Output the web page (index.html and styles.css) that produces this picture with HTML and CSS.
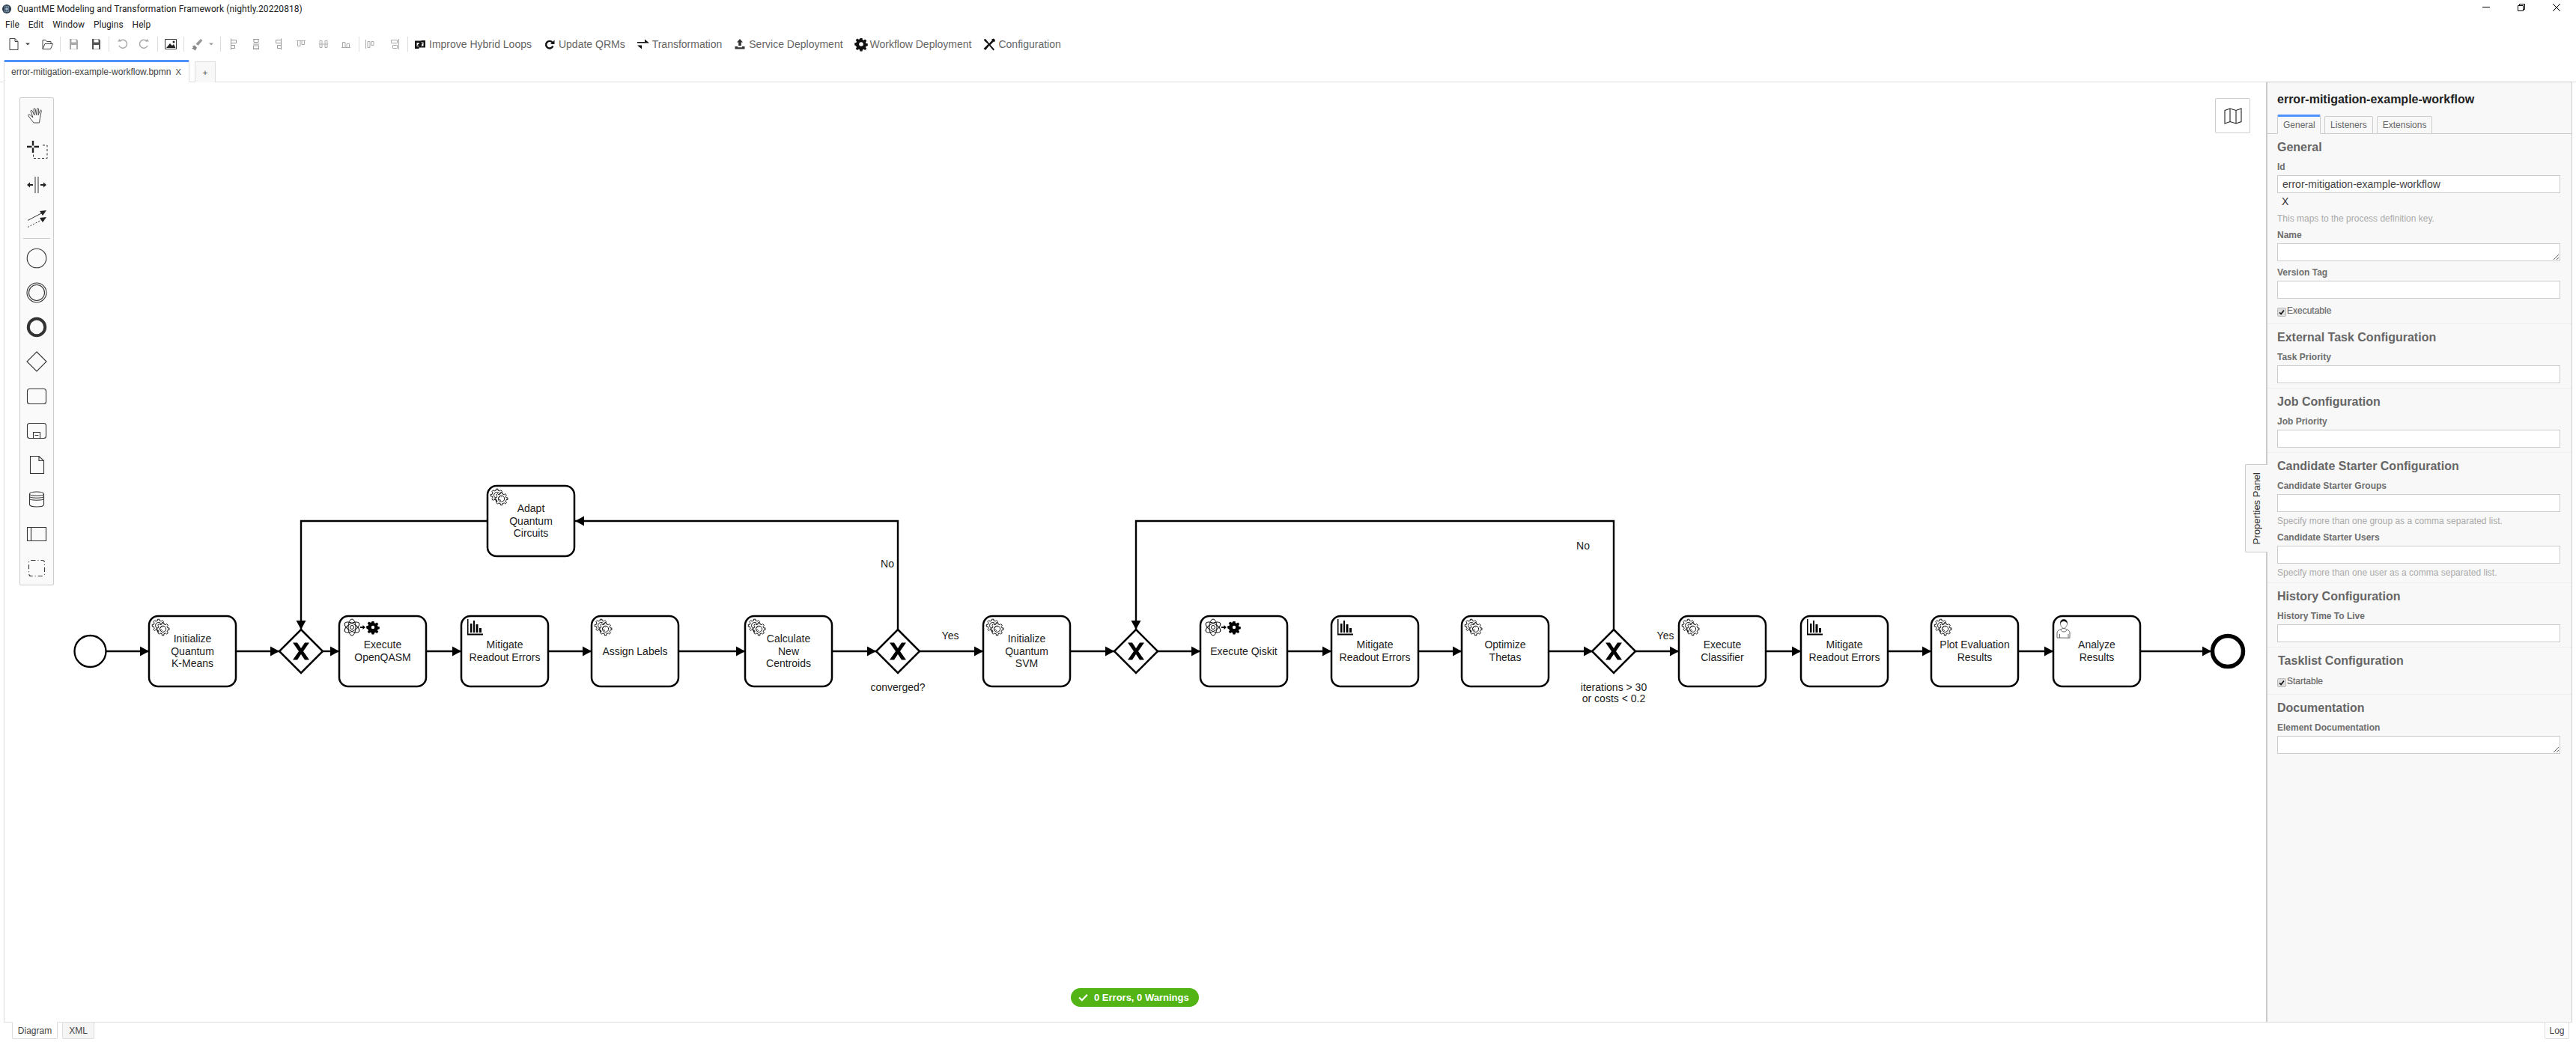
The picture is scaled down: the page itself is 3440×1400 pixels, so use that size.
FILE: index.html
```html
<!DOCTYPE html>
<html lang="en">
<head>
<meta charset="utf-8">
<title>QuantME Modeling and Transformation Framework</title>
<link rel="stylesheet" href="styles.css">
</head>
<body>
<header class="titlebar">
  <svg class="app-icon" viewBox="0 0 12 12"><circle cx="6" cy="6" r="6" fill="#2b3a4d"/><circle cx="6" cy="6" r="1.2" fill="#a9c4d8"/><ellipse cx="6" cy="6" rx="4.6" ry="1.8" fill="none" stroke="#a9c4d8" stroke-width=".6" transform="rotate(60 6 6)"/><ellipse cx="6" cy="6" rx="4.6" ry="1.8" fill="none" stroke="#a9c4d8" stroke-width=".6" transform="rotate(-60 6 6)"/></svg>
  <span class="title-text">QuantME Modeling and Transformation Framework (nightly.20220818)</span>
  <div class="win-controls">
    <svg class="win-btn" viewBox="0 0 12 12"><path d="M1 5.5h10" stroke="#000" fill="none"/></svg>
    <svg class="win-btn" viewBox="0 0 12 12"><path d="M1.5 3.5h7v7h-7zM3.5 3.5v-2h7v7h-2" stroke="#000" fill="none"/></svg>
    <svg class="win-btn" viewBox="0 0 12 12"><path d="M1 1l10 10M11 1L1 11" stroke="#000" fill="none"/></svg>
  </div>
</header>
<nav class="menubar"><span>File</span><span>Edit</span><span>Window</span><span>Plugins</span><span>Help</span></nav>

<div class="toolbar">
  <svg class="tb" viewBox="0 0 30 20"><path d="M10 2.5h7l4 4v11H10zM17 2.5v4h4" fill="none" stroke="#444"/></svg>
  <svg class="tb-caret caret-a" viewBox="0 0 8 20"><path d="M1 8.5h6l-3 3z" fill="#444"/></svg>
  <svg class="tb" viewBox="0 0 30 20"><path d="M9 16.5v-12h4l1.500 2H20v2.500M9 16.500l3-7h10.500l-3 7z" fill="none" stroke="#444"/></svg>
  <i class="sep"></i>
  <svg class="tb" viewBox="0 0 30 20"><path d="M10 3h9l2 2v12H10z" fill="#aaa"/><path d="M12.500 3.500h6v4h-6zM12 11h7v5.500h-7z" fill="#fff"/></svg>
  <svg class="tb" viewBox="0 0 30 20"><path d="M10 3h9l2 2v12H10z" fill="#555"/><path d="M12.500 3.500h6v4h-6zM12 11h7v5.500h-7z" fill="#fff"/></svg>
  <i class="sep"></i>
  <svg class="tb" viewBox="0 0 30 20"><path d="M12 6a5.500 5.500 0 1 1-1 6" fill="none" stroke="#aaa" stroke-width="1.500"/><path d="M9 6.500h5l-2.500-3.500z" fill="#aaa"/></svg>
  <svg class="tb" viewBox="0 0 30 20"><path d="M18 6a5.500 5.500 0 1 0 1 6" fill="none" stroke="#aaa" stroke-width="1.500"/><path d="M21 6.500h-5l2.500-3.500z" fill="#aaa"/></svg>
  <i class="sep"></i>
  <svg class="tb" viewBox="0 0 30 20"><path d="M7.500 3.500h15v13h-15z" fill="#fff" stroke="#333"/><path d="M9 15l5-6 3 3 2-2 2.500 5z" fill="#222"/><circle cx="19" cy="7" r="1.500" fill="#222"/></svg>
  <i class="sep"></i>
  <svg class="tb" viewBox="0 0 30 20"><path d="M20 3l2.500 2-6 7-3-2.500z" fill="#999"/><path d="M9 12.500l3-1 3 3-2 4-5-3 2-1z" fill="#888"/></svg>
  <svg class="tb-caret caret-b" viewBox="0 0 8 20"><path d="M1 8.500h6l-3 3z" fill="#999"/></svg>
  <i class="sep"></i>
  <svg class="tb" viewBox="0 0 30 20"><path d="M11.500 2.500v15M11.500 4.500h7v4h-7zM11.500 11.500h5v4h-5z" fill="none" stroke="#999"/></svg>
  <svg class="tb" viewBox="0 0 30 20"><path d="M11 3.500h8M11 10h8M11 16.500h8M12 3.500h6v4h-6zM11.500 12h7v4h-7z" fill="none" stroke="#999"/></svg>
  <svg class="tb" viewBox="0 0 30 20"><path d="M18.500 2.500v15M11.500 4.500h7v4h-7zM13.500 11.500h5v4h-5z" fill="none" stroke="#999"/></svg>
  <svg class="tb" viewBox="0 0 30 20"><path d="M9 5.500h12M10.500 5.500h3.500v7h-3.500zM16 5.500h3.500v5H16z" fill="none" stroke="#aaa"/></svg>
  <svg class="tb" viewBox="0 0 30 20"><path d="M10 5.500h3v9h-3zM17 5.500h3v9h-3zM9 10h12" fill="none" stroke="#aaa"/></svg>
  <svg class="tb" viewBox="0 0 30 20"><path d="M9 14.500h12M10.500 7.500h3.500v7h-3.500zM16 9.500h3.500v5H16z" fill="none" stroke="#aaa"/></svg>
  <i class="sep"></i>
  <svg class="tb tb-shift" viewBox="0 0 30 20"><path d="M11 6.500h3v8h-3zM16 6.500h3v5h-3zM8.500 4v12" fill="none" stroke="#aaa"/></svg>
  <svg class="tb" viewBox="0 0 30 20"><path d="M10.500 4.500h8v4h-8zM12.500 11.500h6v4h-6zM20.500 3v14" fill="none" stroke="#aaa"/></svg>
  <i class="sep"></i>
  <div class="tool-buttons">
    <div class="tbtn"><svg viewBox="0 0 16 16"><path d="M1 3.500h8.500v3H12L8.500 10.500 6 6.500h1v-.500H3.500v5h3V14H1zM15 12.500H6.500v-2.500H4L7.500 5.500 10.500 10H9v.500h3.500v-5h-3V3h5.500z" fill="#111"/></svg><span>Improve Hybrid Loops</span></div>
    <div class="tbtn"><svg viewBox="0 0 16 16"><path d="M12.500 4.800A6 6 0 1 0 13.500 11l-2.200-1a3.600 3.600 0 1 1-.6-3.600L8.800 8H14.500V2.200z" fill="#111"/></svg><span>Update QRMs</span></div>
    <div class="tbtn"><svg viewBox="0 0 16 16"><path d="M0 5h10V1.500L16 6.500H0zM16 9.500H6V14.500L0 9.500z" fill="#111"/></svg><span>Transformation</span></div>
    <div class="tbtn"><svg viewBox="0 0 16 16"><path d="M8 1l4 4.500H9.800V10H6.200V5.500H4zM1.500 11H5v1.300h6V11h3.500v3.500h-13z" fill="#333"/></svg><span>Service Deployment</span></div>
    <div class="tbtn"><svg viewBox="0 0 16 16"><path fill-rule="evenodd" d="M6.500 0h3l.4 2.200 1.500.6 1.800-1.300 2.100 2.100-1.300 1.800.6 1.500 2.200.4v3l-2.200.4-.6 1.500 1.300 1.800-2.100 2.100-1.800-1.300-1.500.6-.4 2.200h-3l-.4-2.200-1.500-.6-1.800 1.300-2.100-2.100 1.300-1.800-.6-1.500L-.8 9.300v-3l2.200-.4.600-1.500L.7 2.600l2.100-2.100 1.800 1.300 1.500-.6zM8 5.200a2.800 2.800 0 1 0 0 5.600 2.800 2.800 0 0 0 0-5.600z" fill="#111"/></svg><span>Workflow Deployment</span></div>
    <div class="tbtn"><svg viewBox="0 0 16 16"><path d="M1 1.500l2-.5 5 6 4-4.500-1-1 3-1 2 2-1 3-1-1L9.500 9 15 15l-1.500 1.500-5.500-6.500-5 6L0.500 14l6-6L1.500 3.500z" fill="#111"/></svg><span>Configuration</span></div>
  </div>
</div>

<div class="tabbar">
  <div class="tab tab-active"><span>error-mitigation-example-workflow.bpmn</span><span class="tab-x">X</span></div>
  <div class="tab tab-plus">+</div>
</div>

<main class="main">
  <section class="canvas">
    <svg class="diagram" viewBox="6 110 3020 1255" width="3020" height="1255">
      <defs>
        <marker id="arrow" markerUnits="userSpaceOnUse" markerWidth="12" markerHeight="14" refX="12" refY="7" orient="auto"><path d="M0 0.500L12 7 0 13.500z" fill="#000"/></marker>
        <g id="gears" transform="scale(1.17)">
          <path class="gear" d="m 12,18 v -1.71335 c 0.352326,-0.0705 0.703932,-0.17838 1.047628,-0.32133 0.344416,-0.14465 0.665822,-0.32133 0.966377,-0.52145 l 1.19431,1.18005 1.567487,-1.57688 -1.195028,-1.18014 c 0.403376,-0.61394 0.683079,-1.29908 0.825447,-2.01824 l 1.622133,-0.01 v -2.2196 l -1.636514,0.01 c -0.07333,-0.35153 -0.178319,-0.70024 -0.323564,-1.04372 -0.145244,-0.34406 -0.321407,-0.6644 -0.522735,-0.96217 l 1.131035,-1.13631 -1.583305,-1.56293 -1.129598,1.13589 c -0.614052,-0.40108 -1.302883,-0.68093 -2.022633,-0.82247 l 0.0093,-1.61852 h -2.241173 l 0.0042,1.63124 c -0.353763,0.0736 -0.705369,0.17977 -1.049785,0.32371 -0.344415,0.14437 -0.665102,0.32092 -0.9635006,0.52046 l -1.1698628,-1.15823 -1.5667691,1.5792 1.1684265,1.15669 c -0.4026573,0.61283 -0.68308,1.29797 -0.8247287,2.01713 l -1.6588041,0.003 v 2.22174 l 1.6724648,-0.006 c 0.073327,0.35077 0.1797598,0.70243 0.3242851,1.04472 0.1452428,0.34448 0.3214064,0.6644 0.5227339,0.96066 l -1.1993431,1.19723 1.5840256,1.56011 1.1964668,-1.19348 c 0.6140517,0.40346 1.3028827,0.68232 2.0233517,0.82331 l 7.19e-4,1.69892 h 2.226848 z m 0.221462,-3.9957 c -1.788948,0.7502 -3.8576,-0.0928 -4.6097055,-1.87438 -0.7521065,-1.78321 0.090598,-3.84627 1.8802645,-4.59604 1.78823,-0.74936 3.856881,0.0929 4.608987,1.87437 0.752106,1.78165 -0.0906,3.84612 -1.879546,4.59605 z"/>
          <path class="gear-fill" d="m 17.2,18 c 1.788948,0.7502 3.8576,-0.0928 4.6097055,-1.87438 0.7521065,-1.78321 -0.090598,-3.84627 -1.8802645,-4.59604 -1.78823,-0.74936 -3.856881,0.0929 -4.608987,1.87437 -0.752106,1.78165 0.0906,3.84612 1.879546,4.59605 z"/>
          <path class="gear" d="m 17,22 v -1.71335 c 0.352326,-0.0705 0.703932,-0.17838 1.047628,-0.32133 0.344416,-0.14465 0.665822,-0.32133 0.966377,-0.52145 l 1.19431,1.18005 1.567487,-1.57688 -1.195028,-1.18014 c 0.403376,-0.61394 0.683079,-1.29908 0.825447,-2.01824 l 1.622133,-0.01 v -2.2196 l -1.636514,0.01 c -0.07333,-0.35153 -0.178319,-0.70024 -0.323564,-1.04372 -0.145244,-0.34406 -0.321407,-0.6644 -0.522735,-0.96217 l 1.131035,-1.13631 -1.583305,-1.56293 -1.129598,1.13589 c -0.614052,-0.40108 -1.302883,-0.68093 -2.022633,-0.82247 l 0.0093,-1.61852 h -2.241173 l 0.0042,1.63124 c -0.353763,0.0736 -0.705369,0.17977 -1.049785,0.32371 -0.344415,0.14437 -0.665102,0.32092 -0.9635006,0.52046 l -1.1698628,-1.15823 -1.5667691,1.5792 1.1684265,1.15669 c -0.4026573,0.61283 -0.68308,1.29797 -0.8247287,2.01713 l -1.6588041,0.003 v 2.22174 l 1.6724648,-0.006 c 0.073327,0.35077 0.1797598,0.70243 0.3242851,1.04472 0.1452428,0.34448 0.3214064,0.6644 0.5227339,0.96066 l -1.1993431,1.19723 1.5840256,1.56011 1.1964668,-1.19348 c 0.6140517,0.40346 1.3028827,0.68232 2.0233517,0.82331 l 7.19e-4,1.69892 h 2.226848 z m 0.221462,-3.9957 c -1.788948,0.7502 -3.8576,-0.0928 -4.6097055,-1.87438 -0.7521065,-1.78321 0.090598,-3.84627 1.8802645,-4.59604 1.78823,-0.74936 3.856881,0.0929 4.608987,1.87437 0.752106,1.78165 -0.0906,3.84612 -1.879546,4.59605 z"/>
        </g>
        <g id="quantum">
          <g class="atom">
            <ellipse cx="17" cy="15" rx="5" ry="11" transform="rotate(60 17 15)"/>
            <ellipse cx="17" cy="15" rx="5" ry="11" transform="rotate(-60 17 15)"/>
            <ellipse cx="17" cy="15" rx="5" ry="11"/>
            <circle cx="17" cy="15" r="2.500"/>
          </g>
          <path d="M28 14h3.500v-2l3.500 3-3.500 3v-2H28z" fill="#000"/>
          <path fill-rule="evenodd" transform="translate(37 7)" d="M6.500 0h3l.4 2.200 1.500.6 1.800-1.300 2.100 2.100-1.300 1.800.6 1.500 2.200.4v3l-2.200.4-.6 1.500 1.300 1.800-2.100 2.100-1.800-1.300-1.500.6-.4 2.200h-3l-.4-2.200-1.500-.6-1.800 1.300-2.100-2.100 1.300-1.800-.6-1.500L-.8 9.300v-3l2.200-.4.600-1.500L.7 2.600l2.100-2.100 1.800 1.300 1.500-.6zM8 5.800a2.200 2.200 0 1 0 0 4.400 2.200 2.200 0 0 0 0-4.400z" fill="#000"/>
        </g>
        <g id="chart">
          <path d="M8 4h1.500v19.500H29V25.500H8z" fill="#000"/>
          <path d="M12 10h2.500v12H12zM16 6h2v16h-2zM19.500 11h3v11h-3zM24 16h3v6h-3z" fill="#000"/>
        </g>
        <rect id="box" class="task" x="0" y="0" width="116" height="94" rx="12"/>
        <g id="gw">
          <polygon class="task" points="0,-29 29,0 0,29 -29,0"/>
          <polygon points="-11,-11.500 -5,-11.500 0,-4 5,-11.500 11,-11.500 3,0 11,11.500 5,11.500 0,4 -5,11.500 -11,11.500 -3,0" fill="#000"/>
        </g>
      </defs>

      <g class="flows">
        <path marker-end="url(#arrow)" d="M142 870H199"/>
        <path marker-end="url(#arrow)" d="M315 870H373"/>
        <path marker-end="url(#arrow)" d="M431 870H453"/>
        <path marker-end="url(#arrow)" d="M570 870H616"/>
        <path marker-end="url(#arrow)" d="M733 870H790"/>
        <path marker-end="url(#arrow)" d="M906 870H995"/>
        <path marker-end="url(#arrow)" d="M1111 870H1170"/>
        <path marker-end="url(#arrow)" d="M1227 870H1313"/>
        <path marker-end="url(#arrow)" d="M1429 870H1488"/>
        <path marker-end="url(#arrow)" d="M1546 870H1603"/>
        <path marker-end="url(#arrow)" d="M1720 870H1778"/>
        <path marker-end="url(#arrow)" d="M1895 870H1952"/>
        <path marker-end="url(#arrow)" d="M2069 870H2127"/>
        <path marker-end="url(#arrow)" d="M2184 870H2242"/>
        <path marker-end="url(#arrow)" d="M2359 870H2405"/>
        <path marker-end="url(#arrow)" d="M2522 870H2579"/>
        <path marker-end="url(#arrow)" d="M2696 870H2742"/>
        <path marker-end="url(#arrow)" d="M2859 870H2953"/>
        <path marker-end="url(#arrow)" d="M1199 841V696H768"/>
        <path marker-end="url(#arrow)" d="M651 696H402V841"/>
        <path marker-end="url(#arrow)" d="M2155 841V696H1517V841"/>
      </g>

      <circle class="task thin" cx="120.500" cy="870" r="21"/>
      <circle class="end" cx="2975" cy="870" r="20.500"/>

      <use href="#gw" x="402" y="870"/>
      <use href="#gw" x="1199" y="870"/>
      <use href="#gw" x="1517" y="870"/>
      <use href="#gw" x="2155" y="870"/>

      <g transform="translate(199 823)"><use href="#box"/><use href="#gears"/><text class="lbl"><tspan x="58" y="35">Initialize</tspan><tspan x="58" y="52">Quantum</tspan><tspan x="58" y="68">K-Means</tspan></text></g>
      <g transform="translate(651 649)"><use href="#box"/><use href="#gears"/><text class="lbl"><tspan x="58" y="35">Adapt</tspan><tspan x="58" y="52">Quantum</tspan><tspan x="58" y="68">Circuits</tspan></text></g>
      <g transform="translate(453 823)"><use href="#box"/><use href="#quantum"/><text class="lbl"><tspan x="58" y="43">Execute</tspan><tspan x="58" y="60">OpenQASM</tspan></text></g>
      <g transform="translate(616 823)"><use href="#box"/><use href="#chart"/><text class="lbl"><tspan x="58" y="43">Mitigate</tspan><tspan x="58" y="60">Readout Errors</tspan></text></g>
      <g transform="translate(790 823)"><use href="#box"/><use href="#gears"/><text class="lbl" x="58" y="52">Assign Labels</text></g>
      <g transform="translate(995 823)"><use href="#box"/><use href="#gears"/><text class="lbl"><tspan x="58" y="35">Calculate</tspan><tspan x="58" y="52">New</tspan><tspan x="58" y="68">Centroids</tspan></text></g>
      <g transform="translate(1313 823)"><use href="#box"/><use href="#gears"/><text class="lbl"><tspan x="58" y="35">Initialize</tspan><tspan x="58" y="52">Quantum</tspan><tspan x="58" y="68">SVM</tspan></text></g>
      <g transform="translate(1603 823)"><use href="#box"/><use href="#quantum"/><text class="lbl" x="58" y="52">Execute Qiskit</text></g>
      <g transform="translate(1778 823)"><use href="#box"/><use href="#chart"/><text class="lbl"><tspan x="58" y="43">Mitigate</tspan><tspan x="58" y="60">Readout Errors</tspan></text></g>
      <g transform="translate(1952 823)"><use href="#box"/><use href="#gears"/><text class="lbl"><tspan x="58" y="43">Optimize</tspan><tspan x="58" y="60">Thetas</tspan></text></g>
      <g transform="translate(2242 823)"><use href="#box"/><use href="#gears"/><text class="lbl"><tspan x="58" y="43">Execute</tspan><tspan x="58" y="60">Classifier</tspan></text></g>
      <g transform="translate(2405 823)"><use href="#box"/><use href="#chart"/><text class="lbl"><tspan x="58" y="43">Mitigate</tspan><tspan x="58" y="60">Readout Errors</tspan></text></g>
      <g transform="translate(2579 823)"><use href="#box"/><use href="#gears"/><text class="lbl"><tspan x="58" y="43">Plot Evaluation</tspan><tspan x="58" y="60">Results</tspan></text></g>
      <g transform="translate(2742 823)"><use href="#box"/>
        <path d="M5 29v-7c0-2.500 3-3.500 5.500-4.500l2-1 3 .2 2 1c2.500 1 4.500 2 4.500 4.500v7zM8.500 29v-5M20 29v-5M10 18c1 4 7 4 8.500 0" fill="#fff" stroke="#666"/>
        <path d="M9.500 11c-.5-5 2-6.500 4.500-6.500s5 1.500 4.500 6.500c-.5 2-1 4-4.500 5.500-3.500-1.500-4-3.500-4.500-5.500z" fill="#fff" stroke="#555" stroke-width=".800"/>
        <path d="M9.500 10.500c-.5-5 2-6 4.500-6s5 1 4.500 6c-.5-2-2-3.500-4.500-3.500s-4 1.500-4.500 3.500z" fill="#111"/>
        <text class="lbl"><tspan x="58" y="43">Analyze</tspan><tspan x="58" y="60">Results</tspan></text></g>

      <text class="lbl" x="1185" y="758">No</text>
      <text class="lbl" x="1269" y="854">Yes</text>
      <text class="lbl" x="1199" y="923">converged?</text>
      <text class="lbl" x="2114" y="734">No</text>
      <text class="lbl" x="2224" y="854">Yes</text>
      <text class="lbl"><tspan x="2155" y="923">iterations &gt; 30</tspan><tspan x="2155" y="938">or costs &lt; 0.2</tspan></text>
    </svg>

    <div class="palette">
      <svg viewBox="0 0 32 32"><path d="M6 14c2 1 4 3 5 4L8 9.500c0-1.500 1.500-1.500 2-.500l3 6-1-8c0-1.500 2-1.500 2.200 0l1.300 7.500 1-8c.3-1.500 2-1.200 2 .3l-.5 8 2.500-6c.6-1.300 2.200-.8 1.800.5L20.500 18l-1 7H12L8 20l-3-4c-.8-1.200.2-2.500 1-2z" fill="#fff" stroke="#333" stroke-width=".900"/></svg>
      <svg viewBox="0 0 32 32"><path d="M11 3v6.500M11 12.500v6.500M3 11h6.500M12.500 11h6.500" stroke="#222" stroke-width="2.400" fill="none"/><path d="M11.500 21.500v5H30V9h-8" stroke="#333" stroke-dasharray="3 2.500" fill="none"/></svg>
      <svg viewBox="0 0 32 32"><path d="M14 5v22M18 5v22" stroke="#333" fill="none"/><path d="M11 15h-4v-2.500L3 16l4 3.500V17h4zM21 15h4v-2.500l4 3.500-4 3.500V17h-4z" fill="#222"/></svg>
      <svg viewBox="0 0 32 32"><path d="M4 17.500L24 7" stroke="#333" fill="none"/><path d="M20 5l9-1-5 7z" fill="#222"/><path d="M4 26.500L24 16" stroke="#333" stroke-dasharray="2 2" fill="none"/><path d="M20 14l9-1-5 7z" fill="#222"/></svg>
      <i class="pal-sep"></i>
      <svg class="pal-ic" viewBox="0 0 32 32"><circle cx="16" cy="16" r="12.800"/></svg>
      <svg class="pal-ic" viewBox="0 0 32 32"><circle cx="16" cy="16" r="13"/><circle cx="16" cy="16" r="10.500"/></svg>
      <svg viewBox="0 0 32 32"><circle cx="16" cy="16" r="11.200" fill="none" stroke="#333" stroke-width="4"/></svg>
      <svg class="pal-ic" viewBox="0 0 32 32"><path d="M16 3l13 13-13 13L3 16z"/></svg>
      <svg class="pal-ic" viewBox="0 0 32 32"><rect x="3.500" y="6.500" width="25" height="20" rx="3"/></svg>
      <svg class="pal-ic" viewBox="0 0 32 32"><rect x="3.500" y="6.500" width="25" height="20" rx="3"/><path d="M11.500 18.500h9v8h-9zM13.500 22.500h5"/></svg>
      <svg class="pal-ic" viewBox="0 0 32 32"><path d="M7.500 4.500H19l6.500 6v17h-18zM19 4.500v6h6.500"/></svg>
      <svg class="pal-ic" viewBox="0 0 32 32"><path d="M6.500 9c0-4 19-4 19 0v14c0 4-19 4-19 0zM6.500 9c0 3 19 3 19 0M6.500 12c0 3 19 3 19 0M6.500 15c0 3 19 3 19 0"/></svg>
      <svg class="pal-ic" viewBox="0 0 32 32"><path d="M3.500 7.500h25v18h-25zM8.500 7.500v18"/></svg>
      <svg class="pal-ic" viewBox="0 0 32 32"><rect x="5.500" y="5.500" width="21" height="21" rx="3" stroke-dasharray="6 3 1 3"/></svg>
    </div>

    <div class="map-btn"><svg viewBox="0 0 24 22"><path d="M1 3.500L8 1l8 2.500L23 1v17.500L16 21l-8-2.500L1 21zM8 1v17.500M16 3.500V21" fill="none" stroke="#222" stroke-width="1.100"/></svg></div>

    <div class="status"><svg viewBox="0 0 12 10"><path d="M1 5l3.500 3.500L11 1.500" fill="none" stroke="#fff" stroke-width="2"/></svg><span>0 Errors, 0 Warnings</span></div>
  </section>

  <aside class="panel">
    <div class="pp-toggle"><span>Properties Panel</span></div>
    <div class="pp-head">
      <h1>error-mitigation-example-workflow</h1>
      <div class="pp-tabs"><span class="pp-tab pp-tab-on">General</span><span class="pp-tab">Listeners</span><span class="pp-tab">Extensions</span></div>
    </div>

    <section class="group pb9">
      <h2>General</h2>
      <label class="field">Id</label>
      <input class="inp id-val" value="error-mitigation-example-workflow">
      <div class="clear-x">X</div>
      <p class="desc desc-first">This maps to the process definition key.</p>
      <label class="field">Name</label>
      <textarea class="inp"></textarea>
      <label class="field">Version Tag</label>
      <input class="inp">
      <div class="check"><span class="box"><svg viewBox="0 0 12 12"><path d="M2.500 6.500l2.500 2.500 4.500-6" fill="none" stroke="#111" stroke-width="2"/></svg></span>Executable</div>
    </section>
    <section class="group">
      <h2>External Task Configuration</h2>
      <label class="field">Task Priority</label>
      <input class="inp">
    </section>
    <section class="group">
      <h2>Job Configuration</h2>
      <label class="field">Job Priority</label>
      <input class="inp">
    </section>
    <section class="group">
      <h2>Candidate Starter Configuration</h2>
      <label class="field">Candidate Starter Groups</label>
      <input class="inp">
      <p class="desc">Specify more than one group as a comma separated list.</p>
      <label class="field">Candidate Starter Users</label>
      <input class="inp">
      <p class="desc">Specify more than one user as a comma separated list.</p>
    </section>
    <section class="group">
      <h2>History Configuration</h2>
      <label class="field">History Time To Live</label>
      <input class="inp">
    </section>
    <section class="group pb9">
      <h2 class="nudge">Tasklist Configuration</h2>
      <div class="check"><span class="box"><svg viewBox="0 0 12 12"><path d="M2.500 6.500l2.500 2.500 4.500-6" fill="none" stroke="#111" stroke-width="2"/></svg></span>Startable</div>
    </section>
    <section class="group no-line">
      <h2>Documentation</h2>
      <label class="field">Element Documentation</label>
      <textarea class="inp"></textarea>
    </section>
  </aside>
</main>

<footer class="footer">
  <div class="foot-tabs"><span class="ftab ftab-on">Diagram</span><span class="ftab ftab-xml">XML</span></div>
  <span class="ftab log">Log</span>
</footer>
</body>
</html>
```
FILE: styles.css
```css
* { box-sizing: border-box; }
html, body { margin: 0; padding: 0; }
body {
  width: 3440px;
  height: 1400px;
  overflow: hidden;
  display: flex;
  flex-direction: column;
  background: #fff;
  font-family: "Liberation Sans", Arial, sans-serif;
  color: #333;
}

/* title + menu */
.titlebar {
  height: 24px;
  display: flex;
  align-items: center;
  padding-left: 3px;
  font-family: Roboto, "Liberation Sans", sans-serif;
  font-size: 12px;
  letter-spacing: .08px;
  color: #222;
}
.app-icon { width: 12px; height: 12px; margin-right: 8px; }
.win-controls { margin-left: auto; display: flex; gap: 35px; margin-right: 20px; align-self: flex-start; padding-top: 4px; }
.win-btn { width: 12px; height: 12px; display: block; }
.menubar {
  height: 18px;
  display: flex;
  align-items: center;
  padding-left: 7px;
  gap: 12px;
  font-family: Roboto, "Liberation Sans", sans-serif;
  font-size: 12px;
  color: #222;
}

/* toolbar */
.toolbar {
  height: 34px;
  display: flex;
  align-items: center;
  padding-left: 3px;
}
.tb { width: 30px; height: 20px; display: block; flex: none; }
.tb-shift { margin-left: -2px; margin-right: 2px; }
.tb-caret { width: 8px; height: 20px; display: block; flex: none; }
.caret-a { margin-right: 7px; }
.caret-b { margin-right: 6px; }
.sep { width: 1px; height: 20px; background: #ddd; margin: 0 2px; flex: none; }
.tool-buttons { display: flex; margin-left: -2px; }
.tbtn {
  display: flex;
  align-items: center;
  gap: 4px;
  padding: 0 8px;
  font-size: 14px;
  color: #666;
  white-space: nowrap;
}
.tbtn svg { width: 16px; height: 16px; overflow: visible; display: block; }

/* tabs */
.tabbar {
  height: 34px;
  flex: none;
  display: flex;
  align-items: flex-end;
  padding-left: 5px;
  gap: 7px;
  border-bottom: 1px solid #ddd;
}
.tab {
  height: 28px;
  margin-bottom: -1px;
  font-size: 12px;
  color: #444;
  display: flex;
  align-items: center;
  border: 1px solid #ddd;
  background: #f8f8f8;
}
.tab-active {
  width: 248px;
  height: 30px;
  padding-left: 9px;
  background: #fff;
  border-top: 3px solid #4d90ff;
  border-bottom: 1px solid #fff;
  border-radius: 2px 2px 0 0;
}
.tab-x { margin-left: 6px; font-size: 11px; }
.tab-plus { width: 28px; justify-content: center; border-bottom: 0; font-size: 11px; }

/* main */
.main {
  height: 1255px;
  flex: none;
  display: flex;
  margin: 0 5px;
}
.canvas {
  position: relative;
  flex: 1;
  border-left: 1px solid #ddd;
}
.diagram { position: absolute; left: 0; top: 0; display: block; }
.task { fill: #fff; stroke: #000; stroke-width: 2.500; }
.thin { stroke-width: 2.300; }
.end { fill: #fff; stroke: #000; stroke-width: 5.500; }
.flows path { fill: none; stroke: #000; stroke-width: 2.400; }
.gear { fill: #fff; stroke: #000; stroke-width: .800; }
.gear-fill { fill: #fff; }
.atom ellipse, .atom circle { fill: none; stroke: #111; stroke-width: 1; }
.lbl { font-family: "Liberation Sans", Arial, sans-serif; font-size: 14px; fill: #222; text-anchor: middle; }

.palette {
  position: absolute;
  left: 20px;
  top: 20px;
  width: 46px;
  height: 652px;
  background: #fafafa;
  border: 1px solid #ccc;
  border-radius: 2px;
  padding-top: 1px;
  display: flex;
  flex-direction: column;
  align-items: center;
}
.palette svg { width: 32px; height: 32px; margin: 7px 0; display: block; flex: none; }
.pal-ic * { fill: none; stroke: #333; stroke-width: 1.100; }
.pal-sep { width: 36px; height: 1px; background: #ccc; margin: 2px 0 3px; flex: none; }

.map-btn {
  position: absolute;
  top: 21px;
  right: 21px;
  width: 47px;
  height: 47px;
  border: 1px solid #ccc;
  border-radius: 2px;
  background: #fff;
  display: flex;
  align-items: center;
  justify-content: center;
}
.map-btn svg { width: 24px; height: 22px; display: block; }

.status {
  position: absolute;
  left: 1424px;
  bottom: 20px;
  width: 171px;
  height: 25px;
  border-radius: 13px;
  background: #52b415;
  color: #fff;
  font-size: 13px;
  font-weight: bold;
  display: flex;
  align-items: center;
  padding-left: 10px;
  gap: 8px;
}
.status svg { width: 13px; height: 11px; display: block; }

/* properties panel */
.panel {
  position: relative;
  width: 409px;
  flex: none;
  margin-top: -1px;
  background: #f8f8f8;
  border: 1px solid #ccc;
  border-bottom: 0;
  border-left: 2px solid #ccc;
  z-index: 1;
}
.pp-toggle {
  position: absolute;
  right: 100%;
  top: 510px;
  width: 30px;
  height: 118px;
  background: #f8f8f8;
  border: 1px solid #ccc;
  border-right: 0;
  border-radius: 2px 0 0 2px;
  display: flex;
  align-items: center;
  justify-content: center;
  font-size: 13px;
  color: #333;
}
.pp-toggle span { writing-mode: vertical-rl; transform: rotate(180deg); white-space: nowrap; }
.pp-head {
  height: 69px;
  border-bottom: 1px solid #ccc;
  padding: 13px 0 0 13px;
  display: flex;
  flex-direction: column;
}
.pp-head h1 {
  margin: 0;
  font-size: 16px;
  line-height: 20px;
  font-weight: bold;
  color: #222;
}
.pp-tabs { margin-top: auto; display: flex; gap: 5px; align-items: flex-end; margin-bottom: -1px; }
.pp-tab {
  height: 24px;
  padding: 0 7px;
  font-size: 12px;
  line-height: 22px;
  color: #666;
  background: #f8f8f8;
  border: 1px solid #ccc;
  border-radius: 2px 2px 0 0;
}
.pp-tab-on {
  height: 26px;
  width: 58px;
  border-top: 3px solid #4d90ff;
  border-bottom: 1px solid #f8f8f8;
  line-height: 22px;
}
.group {
  padding: 7px 15px 6px 13px;
  border-bottom: 1px solid #eee;
  display: flex;
  flex-direction: column;
}
.pb9 { padding-bottom: 9px; }
.no-line { border-bottom: 0; }
.group h2 {
  margin: 0;
  font-size: 16px;
  line-height: 22px;
  font-weight: bold;
  color: #666;
}
.group h2.nudge { padding-left: 1px; }
.field {
  margin: 8px 0 4px;
  font-size: 12px;
  line-height: 14px;
  font-weight: bold;
  color: #6e6e6e;
}
.inp {
  display: block;
  width: 100%;
  height: 24px;
  margin: 0;
  padding: 0 6px;
  border: 1px solid #ccc;
  border-radius: 0;
  background: #fff;
  outline: 0;
  font-family: "Liberation Sans", Arial, sans-serif;
  font-size: 14px;
  color: #444;
  resize: both;
}
.clear-x {
  margin: 4px 0 0 6px;
  font-size: 14px;
  line-height: 14px;
  color: #333;
}
.desc {
  margin: 5px 0 0;
  font-size: 12px;
  line-height: 14px;
  color: #aaa;
}
.desc-first { margin-top: 9px; }
.check {
  margin-top: 9px;
  font-size: 12px;
  line-height: 14px;
  font-weight: normal;
  color: #666;
  display: flex;
  align-items: flex-start;
  gap: 1px;
  -webkit-text-stroke: .2px #666;
}
.box {
  width: 12px;
  height: 12px;
  margin-top: 3px;
  background: #ddd;
  border: 1px solid #bbb;
  border-radius: 2px;
  display: block;
  flex: none;
}
.box svg { width: 10px; height: 10px; display: block; }

/* footer */
.footer {
  flex: 1;
  margin: 0 5px;
  border-top: 1px solid #ddd;
  display: flex;
  justify-content: space-between;
  align-items: flex-start;
  padding: 0 4px 0 11px;
}
.foot-tabs { display: flex; gap: 6px; }
.ftab {
  height: 23px;
  margin-top: -1px;
  font-size: 12px;
  line-height: 23px;
  text-align: center;
  color: #444;
  background: #f5f5f5;
  border: 1px solid #ddd;
  border-radius: 0 0 2px 2px;
}
.ftab-on { width: 61px; background: #fff; border-top-color: #fff; }
.ftab-xml { width: 43px; }
.log { width: 33px; background: #fff; }
```
